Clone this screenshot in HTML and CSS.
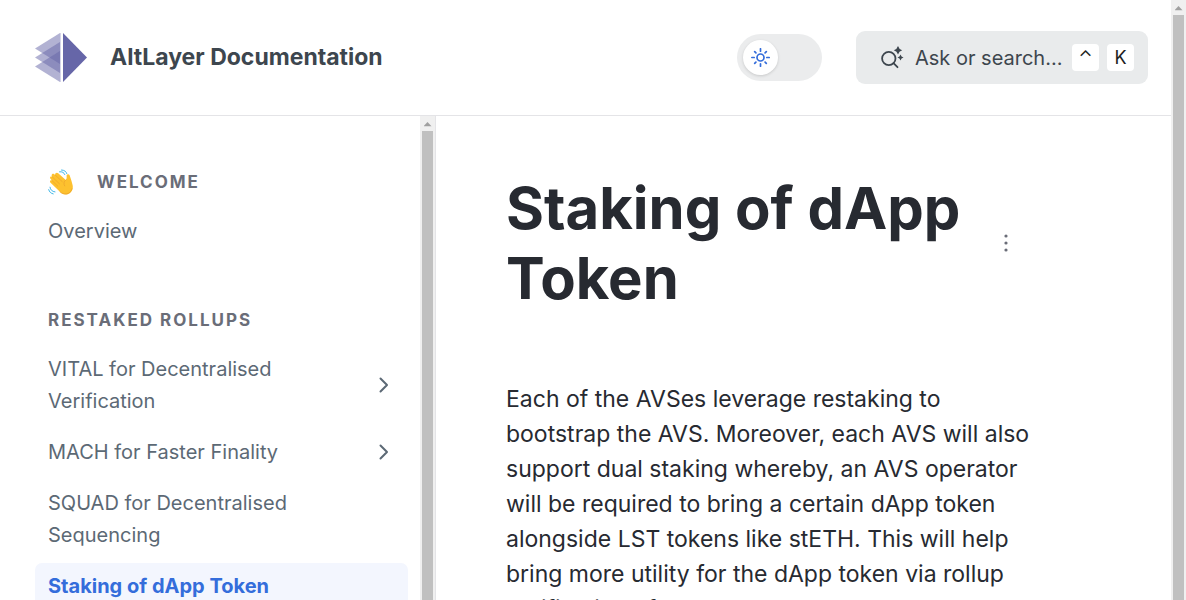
FILE: index.html
```html
<!DOCTYPE html>
<html lang="en">
<head>
<meta charset="utf-8">
<meta name="viewport" content="width=device-width, initial-scale=1">
<title>Staking of dApp Token | AltLayer Documentation</title>
<link rel="stylesheet" href="styles.css">
</head>
<body>
<div class="window">
  <div class="page">
    <header class="header">
      <a class="brand" href="#">
        <svg class="logo" viewBox="0 0 52 49" aria-hidden="true">
          <g fill="#6666a8" fill-opacity=".5">
            <path d="M25 0 0 15.500 25 31z"/>
            <path d="M25 9 0 24.500 25 40z"/>
            <path d="M25 18 0 33.500 25 49z"/>
          </g>
          <path fill="#d5d4e8" d="M25 0h1v49h-1z"/>
          <path fill="#6666a8" d="M28 0 52 24.500 28 49z"/>
        </svg>
        <span>AltLayer Documentation</span>
      </a>
      <div class="tools">
        <button class="theme" type="button" aria-label="Toggle theme">
          <span class="knob">
            <svg viewBox="0 0 20 20" width="20" height="20" fill="none" stroke="#346ddb" stroke-width="1.700" stroke-linecap="round" aria-hidden="true">
              <circle cx="9.500" cy="9.500" r="3.500"/>
              <path d="M9.500.8v2.400M9.500 15.800v2.400M.8 9.500h2.400M15.800 9.500h2.400M3.700 3.700l1.200 1.200M14.100 14.100l1.200 1.200M3.700 15.300l1.200-1.200M14.100 4.900l1.200-1.200"/>
            </svg>
          </span>
        </button>
        <button class="search" type="button">
          <svg viewBox="0 0 24 24" width="24" height="24" aria-hidden="true">
            <g fill="none" stroke="#3d464e" stroke-width="1.800" stroke-linecap="round">
              <circle cx="8.800" cy="12.500" r="6.700"/>
              <path d="M13.500 17.200l4 4"/>
            </g>
            <path fill="#3d464e" d="M18 0q.9 3.300 4.200 4.200-3.300.9-4.200 4.200-.9-3.300-4.200-4.200 3.300-.9 4.200-4.200zM20.500 8.500q.6 2.400 3 3-2.400.6-3 3-.6-2.400-3-3 2.400-.6 3-3z"/>
          </svg>
          <span class="label">Ask or search...</span>
          <kbd>⌃</kbd><kbd>K</kbd>
        </button>
      </div>
    </header>
    <div class="body">
      <nav class="sidebar">
        <h2 class="group welcome">
          <svg viewBox="0 0 26 26" width="26" height="26" aria-hidden="true">
            <path fill="#fdc12f" d="M2.300 13.400c-.9-1.300.5-2.700 1.700-1.800L2.300 9.600C1.400 8.100 3 6.700 4.300 7.900L3.800 7C3 5.200 5 4 6.200 5.200l1 .8C6.700 4.300 8.700 3 10.200 4.300l7.600 6.600c.9-1 1-2.300.8-3.700-.3-1.900 2-2.800 2.900-1.100.8 1.800 1.300 3.900 2 5.900l1 3.700c1.200 4.400-1.300 8.800-5.400 9.700-3.100.7-5.500-.7-7.200-2.600z"/>
            <path fill="none" stroke="#e9a22c" stroke-width=".7" stroke-linecap="round" d="m4 11.600 5.800 5.600M4.300 7.900l7.200 7M7.200 6l7 6.600M17.800 10.900c-2 1.500-2.400 3.700-1.200 6M12 22.900c3.600 3.400 10.400 3 12.100-3.200"/>
            <path fill="none" stroke="#42b8e8" stroke-width="1" stroke-linecap="round" d="M11.500 2.800c3-.3 4.400.7 5.300 2.800M13.500 1c2.900.1 4.600 1.400 5.300 3.600M2 18.200c.4 2.700 2 4.300 5 4.700M.7 20.600c.6 2.300 2.100 3.800 4.500 4.300"/>
          </svg>
          <span>Welcome</span>
        </h2>
        <a class="item" href="#">Overview</a>
        <h2 class="group">Restaked Rollups</h2>
        <a class="item" href="#"><span>VITAL for Decentralised Verification</span>
          <svg class="chevron" viewBox="0 0 10 16" aria-hidden="true"><path d="M1.500 1.500 8 8l-6.500 6.500"/></svg></a>
        <a class="item" href="#"><span>MACH for Faster Finality</span>
          <svg class="chevron" viewBox="0 0 10 16" aria-hidden="true"><path d="M1.500 1.500 8 8l-6.500 6.500"/></svg></a>
        <a class="item" href="#"><span>SQUAD for Decentralised Sequencing</span></a>
        <a class="item current" href="#" aria-current="page">Staking of dApp Token</a>
      </nav>
      <div class="scrollbar" aria-hidden="true"><span class="arrow"></span><span class="thumb"></span></div>
      <main class="content">
        <div class="heading">
          <h1>Staking of dApp Token</h1>
          <button class="more" type="button" aria-label="More actions">
            <svg viewBox="0 0 4 18" width="4" height="18" fill="#6a6d78" aria-hidden="true"><circle cx="2" cy="2" r="1.600"/><circle cx="2" cy="9" r="1.600"/><circle cx="2" cy="16" r="1.600"/></svg>
          </button>
        </div>
        <p>Each of the AVSes leverage restaking to bootstrap the AVS. Moreover, each AVS will also support dual staking whereby, an AVS operator will be required to bring a certain dApp token alongside LST tokens like stETH. This will help bring more utility for the dApp token via rollup verification of</p>
      </main>
    </div>
  </div>
  <div class="scrollbar" aria-hidden="true"><span class="arrow"></span><span class="thumb"></span></div>
</div>
</body>
</html>
```
FILE: styles.css
```css
* { box-sizing: border-box; }
body {
  margin: 0;
  overflow: hidden;
  font-family: Inter, "Liberation Sans", sans-serif;
  color: #272a31;
  background: #fff;
}
a { color: inherit; text-decoration: none; }
button { border: 0; padding: 0; font: inherit; color: inherit; cursor: pointer; }
svg { flex: none; }

.window { display: flex; height: 100vh; }
.page { flex: 1; min-width: 0; display: flex; flex-direction: column; }

.header {
  flex: none;
  display: flex;
  align-items: center;
  justify-content: space-between;
  padding: 31px 23px 31px 35px;
  border-bottom: 1px solid #e4e4e7;
}
.brand {
  display: flex;
  align-items: center;
  gap: 23px;
  font-size: 23px;
  font-weight: 700;
  line-height: 32px;
  color: #3d464e;
}
.brand span { padding-bottom: 2px; }
.logo { width: 52px; height: 49px; }
.tools { display: flex; align-items: center; gap: 34px; }
.theme {
  width: 85px;
  height: 47px;
  padding: 6px;
  border-radius: 24px;
  background: #ebeced;
}
.knob {
  display: flex;
  align-items: center;
  justify-content: center;
  width: 35px;
  height: 35px;
  border-radius: 50%;
  background: #fff;
  box-shadow: 0 1px 3px rgba(0, 0, 0, .15);
}
.search {
  display: flex;
  align-items: center;
  width: 292px;
  height: 53px;
  padding: 0 14px 0 24px;
  border-radius: 9px;
  background: #e9ebec;
  font-size: 20px;
  color: #3d464e;
}
.search .label { flex: 1; margin-left: 11px; text-align: left; white-space: nowrap; }
kbd {
  width: 27px;
  height: 27px;
  border-radius: 4px;
  background: #fff;
  color: #1d1d1d;
  font: 18px/27px Inter, "Liberation Sans", sans-serif;
  text-align: center;
}
kbd + kbd { margin-left: 8px; }

.body { flex: 1; min-height: 0; display: flex; }
.sidebar {
  flex: none;
  width: 420px;
  padding: 45px 12px 0 35px;
  overflow: hidden;
}
.group {
  display: flex;
  align-items: center;
  height: 42px;
  margin: 0;
  padding-left: 13px;
  gap: 23px;
  font-size: 17px;
  font-weight: 700;
  letter-spacing: 2px;
  text-transform: uppercase;
  color: #6a6d78;
}
.item {
  display: flex;
  align-items: center;
  justify-content: space-between;
  padding: 7px 19px 7px 13px;
  margin-bottom: 5px;
  border-radius: 7px;
  font-size: 20px;
  line-height: 32px;
  color: #5c6975;
}
.item + .group { margin-top: 45px; }
.group + .item { margin-top: 5px; }
.item span { max-width: 260px; }
.current { background: #f3f6fe; color: #346ddb; font-weight: 700; }
.chevron {
  width: 10px;
  height: 16px;
  fill: none;
  stroke: #5c6975;
  stroke-width: 2;
  stroke-linecap: round;
  stroke-linejoin: round;
}

.scrollbar {
  flex: none;
  display: flex;
  flex-direction: column;
  align-items: center;
  width: 15px;
  background: #f0f0f0;
}
.arrow {
  flex: none;
  width: 8px;
  height: 15px;
  background: #a0a0a0;
  clip-path: polygon(50% 40%, 100% 68%, 0 68%);
}
.thumb { flex: 1; width: 11px; background: #c0c0c0; }

.content {
  flex: 1;
  min-width: 0;
  padding: 57px 131px 0 70px;
  border-left: 1px solid #e4e4e7;
  overflow: hidden;
}
.heading { display: flex; align-items: center; justify-content: space-between; }
h1 { max-width: 470px; margin: 0; font-size: 58px; font-weight: 700; line-height: 70px; }
.more { display: flex; justify-content: center; width: 18px; margin-right: 25px; background: none; }
p { margin: 69px 0 0; font-size: 23px; line-height: 35px; }
```
